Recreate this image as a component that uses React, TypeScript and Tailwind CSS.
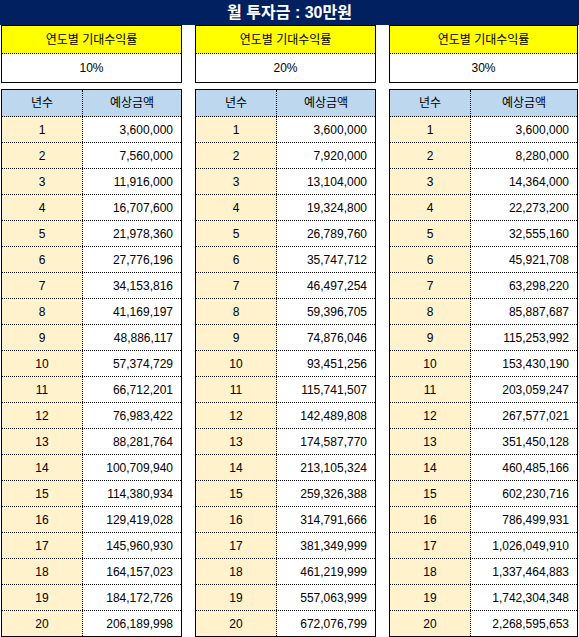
const rates = [
  {
    label: "10%",
    width: "w-[181px]",
    values: [
      "3,600,000", "7,560,000", "11,916,000", "16,707,600", "21,978,360",
      "27,776,196", "34,153,816", "41,169,197", "48,886,117", "57,374,729",
      "66,712,201", "76,983,422", "88,281,764", "100,709,940", "114,380,934",
      "129,419,028", "145,960,930", "164,157,023", "184,172,726", "206,189,998",
    ],
  },
  {
    label: "20%",
    width: "w-[181px]",
    values: [
      "3,600,000", "7,920,000", "13,104,000", "19,324,800", "26,789,760",
      "35,747,712", "46,497,254", "59,396,705", "74,876,046", "93,451,256",
      "115,741,507", "142,489,808", "174,587,770", "213,105,324", "259,326,388",
      "314,791,666", "381,349,999", "461,219,999", "557,063,999", "672,076,799",
    ],
  },
  {
    label: "30%",
    width: "w-[189px]",
    values: [
      "3,600,000", "8,280,000", "14,364,000", "22,273,200", "32,555,160",
      "45,921,708", "63,298,220", "85,887,687", "115,253,992", "153,430,190",
      "203,059,247", "267,577,021", "351,450,128", "460,485,166", "602,230,716",
      "786,499,931", "1,026,049,910", "1,337,464,883", "1,742,304,348", "2,268,595,653",
    ],
  },
];

const RateColumn = ({ rate }: { rate: (typeof rates)[number] }) => (
  <div className={`${rate.width} flex flex-col`}>
    <div className="border border-black">
      <div className="h-[28px] bg-[#FFFF00] border-b border-dotted border-black flex items-center justify-center">
        연도별 기대수익률
      </div>
      <div className="h-[28px] bg-white flex items-center justify-center">
        {rate.label}
      </div>
    </div>
    <div className="mt-[6px] border-l border-t border-r border-black">
      <div className="h-[27px] flex bg-[#BDD7EE] border-b border-dotted border-black">
        <div className="w-[81px] border-r border-dotted border-black flex items-center justify-center">
          년수
        </div>
        <div className="flex-1 flex items-center justify-center">예상금액</div>
      </div>
      {rate.values.map((v, i) => (
        <div
          key={i}
          className={
            i === rate.values.length - 1
              ? "h-[26px] flex border-b border-solid border-black"
              : "h-[26px] flex border-b border-dotted border-black"
          }
        >
          <div className="w-[81px] bg-[#FFF2CC] border-r border-dotted border-black flex items-center justify-center">
            {i + 1}
          </div>
          <div className="flex-1 bg-white flex items-center justify-end pr-[8px]">
            {v}
          </div>
        </div>
      ))}
    </div>
  </div>
);

export default function App() {
  return (
    <div className="w-[579px] h-[637px] bg-white text-black text-[12px] font-['Liberation_Sans','Noto_Sans_CJK_KR',sans-serif] overflow-hidden">
      <div className="h-[25px] bg-[#002060] text-white font-bold text-[16px] flex items-center justify-center">
        월 투자금 : 30만원
      </div>
      <div className="flex gap-[13px] pl-px">
        {rates.map((r) => (
          <RateColumn key={r.label} rate={r} />
        ))}
      </div>
    </div>
  );
}
